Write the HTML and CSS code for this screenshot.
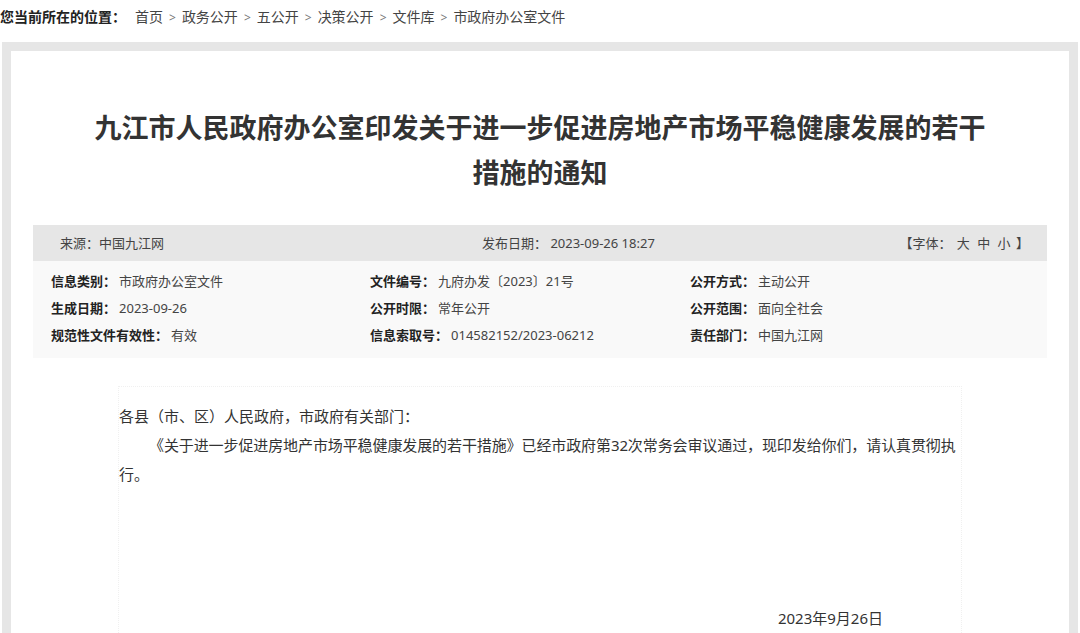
FILE: index.html
```html
<!DOCTYPE html>
<html lang="zh-CN">
<head>
  <meta charset="UTF-8" />
  <meta name="viewport" content="width=device-width, initial-scale=1.0" />
  <title>九江市人民政府办公室印发关于进一步促进房地产市场平稳健康发展的若干措施的通知</title>
  <link rel="stylesheet" href="styles.css">
</head>
<body>
  <!-- Breadcrumb -->
  <div class="crumb"><b class="crumb-label">您当前所在的位置：</b><a href="#">首页</a><span class="sep">&gt;</span><a href="#">政务公开</a><span class="sep">&gt;</span><a href="#">五公开</a><span class="sep">&gt;</span><a href="#">决策公开</a><span class="sep">&gt;</span><a href="#">文件库</a><span class="sep">&gt;</span><a href="#">市政府办公室文件</a></div>

  <div class="frame">
    <div class="article">
      <h1 class="title">九江市人民政府办公室印发关于进一步促进房地产市场平稳健康发展的若干措施的通知</h1>

      <div class="info-bar">
        <span>来源：中国九江网</span>
        <span>发布日期：&nbsp;2023-09-26 18:27</span>
        <span class="font-size">【字体：&nbsp;<a href="#">大</a> <a href="#">中</a> <a href="#">小</a> 】</span>
      </div>

      <div class="meta">
        <div><b>信息类别：</b>市政府办公室文件</div>
        <div><b>文件编号：</b>九府办发〔2023〕21号</div>
        <div><b>公开方式：</b>主动公开</div>
        <div><b>生成日期：</b>2023-09-26</div>
        <div><b>公开时限：</b>常年公开</div>
        <div><b>公开范围：</b>面向全社会</div>
        <div><b>规范性文件有效性：</b>有效</div>
        <div><b>信息索取号：</b>014582152/2023-06212</div>
        <div><b>责任部门：</b>中国九江网</div>
      </div>

      <div class="content">
        <p>各县（市、区）人民政府，市政府有关部门：</p>
        <p class="indent">《关于进一步促进房地产市场平稳健康发展的若干措施》已经市政府第32次常务会审议通过，现印发给你们，请认真贯彻执行。</p>
        <p>&nbsp;</p>
        <p>&nbsp;</p>
        <p>&nbsp;</p>
        <p>&nbsp;</p>
        <p class="date">2023年9月26日</p>
        <p>&nbsp;</p>
      </div>
    </div>
  </div>
</body>
</html>
```

FILE: styles.css
```css
body {
  margin: 0;
  padding: 0;
  background: #fff;
  color: #333;
  font-family: "Noto Sans", "Noto Sans CJK SC", sans-serif;
}
a {
  color: inherit;
  text-decoration: none;
}

/* Breadcrumb */
.crumb {
  height: 34px;
  line-height: 34px;
  font-size: 14px;
  color: #444;
  margin-bottom: 8px;
  white-space: nowrap;
}
.crumb-label {
  color: #222;
  margin-right: 9px;
}
.crumb .sep {
  color: #777;
  font-size: 12px;
  padding: 0 6px;
}

/* Gray frame around the article */
.frame {
  margin: 0 2px;
  border: 9px solid #e6e6e6;
  border-bottom: none;
  background: #fff;
}
.article {
  padding: 54px 22px 0 22px;
}
.title {
  margin: 0 auto;
  width: 900px;
  font-size: 27px;
  line-height: 45px;
  font-weight: bold;
  color: #333;
  text-align: center;
}

/* Source / date bar */
.info-bar {
  margin-top: 30px;
  height: 36px;
  line-height: 36px;
  background: #e6e6e6;
  font-size: 13px;
  color: #444;
  padding: 0 18px 0 27px;
  display: grid;
  grid-template-columns: 422px 1fr auto;
}
.font-size a {
  margin: 0 2px;
}

/* Meta data table */
.meta {
  background: #f9f9f9;
  padding: 7px 0 9px 18px;
  display: grid;
  grid-template-columns: 319px 320px 1fr;
  font-size: 13px;
  line-height: 27px;
  color: #444;
}
.meta b {
  color: #222;
  margin-right: 3px;
}

/* Body text */
.content {
  width: 844px;
  margin: 28px auto 0 auto;
  border: 1px dotted #f0f0f0;
  border-bottom: none;
  box-sizing: border-box;
  padding-top: 15px;
  font-size: 15px;
  line-height: 28.8px;
  color: #333;
}
.content p {
  margin: 0;
}
.content .indent {
  text-indent: 2em;
  letter-spacing: -0.1px;
}
.content .date {
  text-align: right;
  padding-right: 78px;
}
```
